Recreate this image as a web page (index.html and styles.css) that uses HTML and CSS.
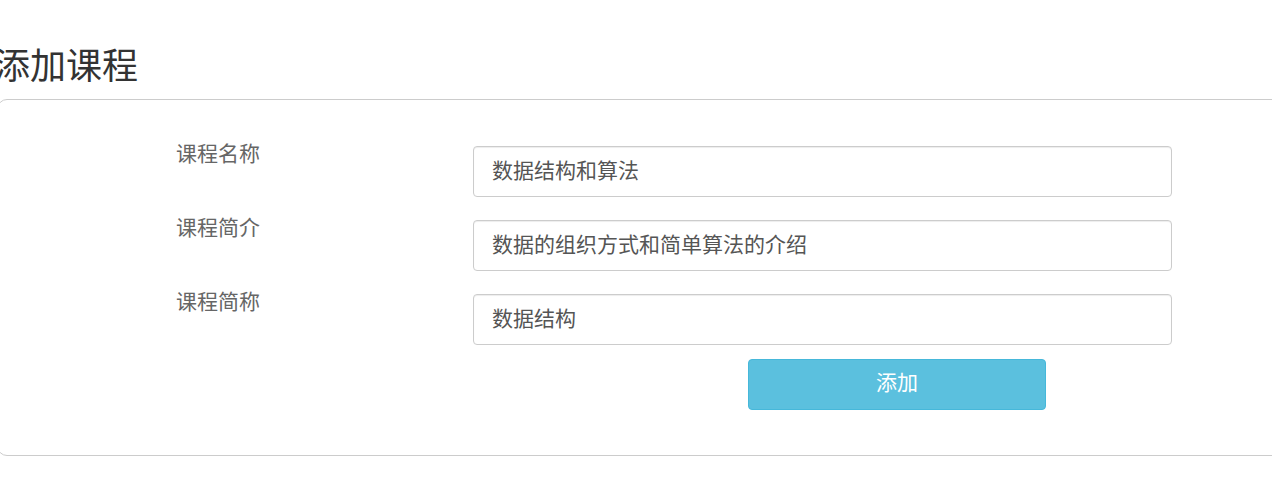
FILE: index.html
```html
<!DOCTYPE html>
<html lang="zh">
<head>
<meta charset="utf-8">
<title>添加课程</title>
<link rel="stylesheet" href="styles.css">
</head>
<body>
<div class="page">
  <h1 class="title">添加课程</h1>
  <div class="panel">
    <form class="form">
      <div class="row">
        <label class="label">课程名称</label>
        <input class="input" type="text" value="数据结构和算法">
      </div>
      <div class="row">
        <label class="label">课程简介</label>
        <input class="input" type="text" value="数据的组织方式和简单算法的介绍">
      </div>
      <div class="row">
        <label class="label">课程简称</label>
        <input class="input" type="text" value="数据结构">
      </div>
      <div class="actions">
        <button class="btn" type="button">添加</button>
      </div>
    </form>
  </div>
</div>
</body>
</html>
```

FILE: styles.css
```css
html, body {
  margin: 0;
  padding: 0;
  background: #fff;
  overflow: hidden;
}
body {
  font-family: "Noto Sans CJK SC", "Liberation Sans", sans-serif;
  color: #333;
}
.page {
  margin-left: -3px;
  padding-top: 37px;
  width: 1320px;
}
.title {
  margin: 0 0 10px 0;
  font-size: 36px;
  font-weight: 400;
  line-height: 52px;
  color: #333;
  text-indent: -3px;
}
.panel {
  border: 1px solid #ccc;
  border-radius: 10px;
  padding: 46px 0 45px 0;
}
.form {
  display: flex;
  flex-direction: column;
  gap: 23px;
}
.row {
  display: flex;
  align-items: flex-start;
}
.label {
  flex: 0 0 475px;
  padding-left: 178px;
  box-sizing: border-box;
  font-size: 21px;
  line-height: 22px;
  color: #666;
  margin-top: -5px;
}
.input {
  flex: 0 0 699px;
  height: 51px;
  box-sizing: border-box;
  border: 1px solid #ccc;
  border-radius: 4px;
  padding: 0 18px 5px 18px;
  font-family: "Noto Sans CJK SC", "Liberation Sans", sans-serif;
  font-size: 21px;
  color: #555;
  background: #fff;
  box-shadow: inset 0 1px 1px rgba(0,0,0,0.075);
  outline: none;
}
.actions {
  display: flex;
  padding-left: 750px;
  margin-top: -9px;
}
.btn {
  width: 298px;
  height: 51px;
  border: 1px solid #46b8da;
  border-radius: 4px;
  background: #5bc0de;
  color: #fff;
  font-family: "Noto Sans CJK SC", "Liberation Sans", sans-serif;
  font-size: 21px;
  cursor: pointer;
  padding: 0 0 8px 0;
}
```
